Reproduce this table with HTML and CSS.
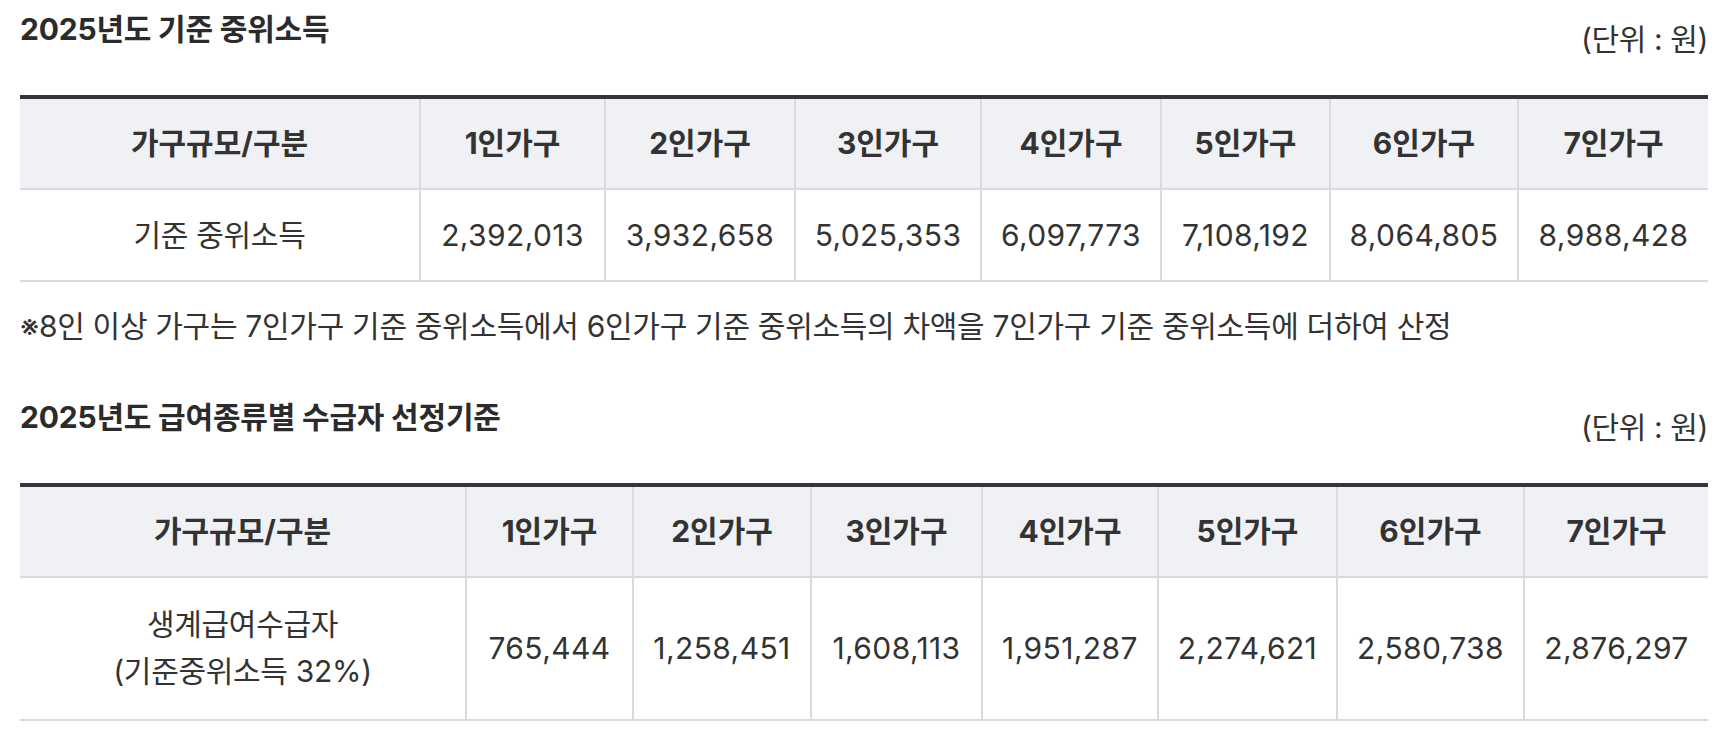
FILE: index.html
```html
<!DOCTYPE html>
<html lang="ko">
<head>
<meta charset="utf-8">
<title>2025년도 기준 중위소득</title>
<link rel="stylesheet" href="styles.css">
</head>
<body>
<div class="page">
  <section class="block">
    <div class="block-head">
      <h2 class="block-title">2025년도 기준 중위소득</h2>
      <span class="unit">(단위 : 원)</span>
    </div>
    <table class="data t1">
      <colgroup>
        <col class="c1"><col class="c2"><col class="c3"><col class="c4"><col class="c5"><col class="c6"><col class="c7"><col class="c8">
      </colgroup>
      <thead>
        <tr>
          <th>가구규모/구분</th>
          <th>1인가구</th>
          <th>2인가구</th>
          <th>3인가구</th>
          <th>4인가구</th>
          <th>5인가구</th>
          <th>6인가구</th>
          <th>7인가구</th>
        </tr>
      </thead>
      <tbody>
        <tr>
          <td class="label">기준 중위소득</td>
          <td class="num">2,392,013</td>
          <td class="num">3,932,658</td>
          <td class="num">5,025,353</td>
          <td class="num">6,097,773</td>
          <td class="num">7,108,192</td>
          <td class="num">8,064,805</td>
          <td class="num">8,988,428</td>
        </tr>
      </tbody>
    </table>
    <p class="note">※8인 이상 가구는 7인가구 기준 중위소득에서 6인가구 기준 중위소득의 차액을 7인가구 기준 중위소득에 더하여 산정</p>
  </section>

  <section class="block">
    <div class="block-head">
      <h2 class="block-title">2025년도 급여종류별 수급자 선정기준</h2>
      <span class="unit">(단위 : 원)</span>
    </div>
    <table class="data t2">
      <colgroup>
        <col class="c1"><col class="c2"><col class="c3"><col class="c4"><col class="c5"><col class="c6"><col class="c7"><col class="c8">
      </colgroup>
      <thead>
        <tr>
          <th>가구규모/구분</th>
          <th>1인가구</th>
          <th>2인가구</th>
          <th>3인가구</th>
          <th>4인가구</th>
          <th>5인가구</th>
          <th>6인가구</th>
          <th>7인가구</th>
        </tr>
      </thead>
      <tbody>
        <tr class="tall">
          <td class="label">생계급여수급자<br>(기준중위소득 32%)</td>
          <td class="num">765,444</td>
          <td class="num">1,258,451</td>
          <td class="num">1,608,113</td>
          <td class="num">1,951,287</td>
          <td class="num">2,274,621</td>
          <td class="num">2,580,738</td>
          <td class="num">2,876,297</td>
        </tr>
      </tbody>
    </table>
  </section>
</div>
</body>
</html>
```

FILE: styles.css
```css
html, body {
  margin: 0;
  padding: 0;
  background: #ffffff;
}

body {
  font-family: Inter, "Noto Sans CJK KR", sans-serif;
  color: #333333;
}

.page {
  padding: 7px 16px 0 20px;
}

.block + .block {
  margin-top: 46px;
}

.block-head {
  display: flex;
  justify-content: space-between;
  align-items: flex-start;
  margin-bottom: 33px;
}

.block-title {
  margin: 0;
  font-size: 30px;
  font-weight: 700;
  line-height: 45px;
  letter-spacing: -0.2px;
  color: #2b2b2b;
}

.unit {
  margin-top: 10px;
  font-size: 30px;
  line-height: 45px;
  letter-spacing: -0.4px;
  color: #333333;
}

.data {
  width: 100%;
  table-layout: fixed;
  border-collapse: separate;
  border-spacing: 0;
  border-top: 4px solid #34363c;
}

.data th,
.data td {
  text-align: center;
  vertical-align: middle;
  line-height: 45px;
  border-right: 2px solid #dadada;
  border-bottom: 2px solid #dadada;
  white-space: nowrap;
}

.data th:last-child,
.data td:last-child {
  border-right: 0;
}

.data th {
  padding: 22px 2px;
  background: #f0f1f5;
  font-size: 30px;
  font-weight: 700;
  letter-spacing: 0;
  color: #333333;
}

.data td {
  padding: 23px 2px 22px;
  font-size: 30px;
  font-weight: 400;
  color: #333333;
}

.data td.label {
  letter-spacing: -0.3px;
}

.data td.num {
  letter-spacing: 0.4px;
}

.data .tall td {
  padding-top: 23px;
  padding-bottom: 24px;
}

.data .tall td.label {
  line-height: 47px;
}

.t1 .c1 { width: 401px; }
.t1 .c2 { width: 185px; }
.t1 .c3 { width: 190px; }
.t1 .c4 { width: 186px; }
.t1 .c5 { width: 180px; }
.t1 .c6 { width: 169px; }
.t1 .c7 { width: 188px; }
.t1 .c8 { width: 189px; }

.t2 .c1 { width: 447px; }
.t2 .c2 { width: 167px; }
.t2 .c3 { width: 178px; }
.t2 .c4 { width: 171px; }
.t2 .c5 { width: 176px; }
.t2 .c6 { width: 179px; }
.t2 .c7 { width: 187px; }
.t2 .c8 { width: 183px; }

.note {
  margin: 22px 0 0;
  font-size: 30px;
  line-height: 45px;
  letter-spacing: -0.3px;
  color: #333333;
}
```
